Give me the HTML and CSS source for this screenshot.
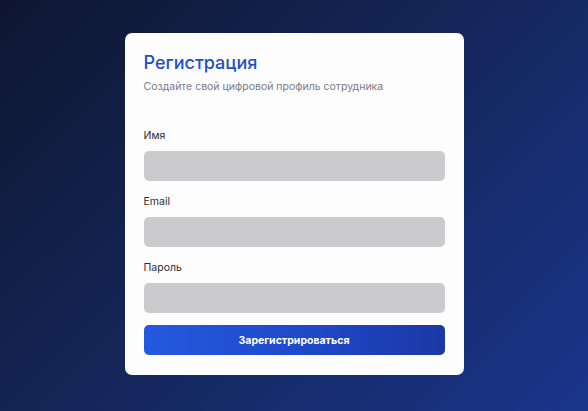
FILE: index.html
```html
<!DOCTYPE html>
<html lang="ru">
<head>
<meta charset="utf-8">
<title>Регистрация</title>
<link rel="stylesheet" href="styles.css">
</head>
<body>
<main class="page">
  <form class="card">
    <header class="card-head">
      <h1 class="title">Регистрация</h1>
      <p class="subtitle">Создайте свой цифровой профиль сотрудника</p>
    </header>
    <div class="fields">
      <label class="field">
        <span class="label">Имя</span>
        <input class="input" type="text">
      </label>
      <label class="field">
        <span class="label">Email</span>
        <input class="input" type="email">
      </label>
      <label class="field">
        <span class="label">Пароль</span>
        <input class="input" type="password">
      </label>
    </div>
    <button class="submit" type="button">Зарегистрироваться</button>
  </form>
</main>
</body>
</html>
```
FILE: styles.css
```css
* { box-sizing: border-box; }
html, body { margin: 0; padding: 0; }
body {
  font-family: Inter, "Noto Sans", "Liberation Sans", sans-serif;
  background: linear-gradient(135deg, #0e1630 0%, #142556 45%, #1a368c 100%);
  min-height: 411px;
}
.page {
  height: 411px;
  display: flex;
  align-items: flex-start;
  justify-content: center;
  padding-top: 33px;
}
.card {
  width: 339px;
  background: #fdfdfe;
  border-radius: 7px;
  padding: 18px 19px 20px 19px;
  display: flex;
  flex-direction: column;
}
.card-head { display: flex; flex-direction: column; gap: 5px; }
.title {
  margin: 0;
  font-size: 18px;
  line-height: 24px;
  font-weight: 500;
  color: #2150c6;
  letter-spacing: 0;
}
.subtitle {
  margin: 0;
  font-size: 10.5px;
  line-height: 14px;
  color: #7b7b82;
}
.fields {
  margin-top: 35px;
  display: flex;
  flex-direction: column;
  gap: 14px;
}
.field { display: flex; flex-direction: column; gap: 8px; }
.label {
  font-size: 10.5px;
  line-height: 14px;
  color: #2c2c30;
}
.input {
  height: 30px;
  border: none;
  border-radius: 5px;
  background: #cbcacd;
  outline: none;
  padding: 0 10px;
}
.submit {
  margin-top: 12px;
  height: 30px;
  border: none;
  border-radius: 5px;
  background: linear-gradient(90deg, #2559df 0%, #1f48c9 55%, #1c38a6 100%);
  color: #ffffff;
  font-family: inherit;
  font-size: 10.5px;
  font-weight: 700;
}
```
